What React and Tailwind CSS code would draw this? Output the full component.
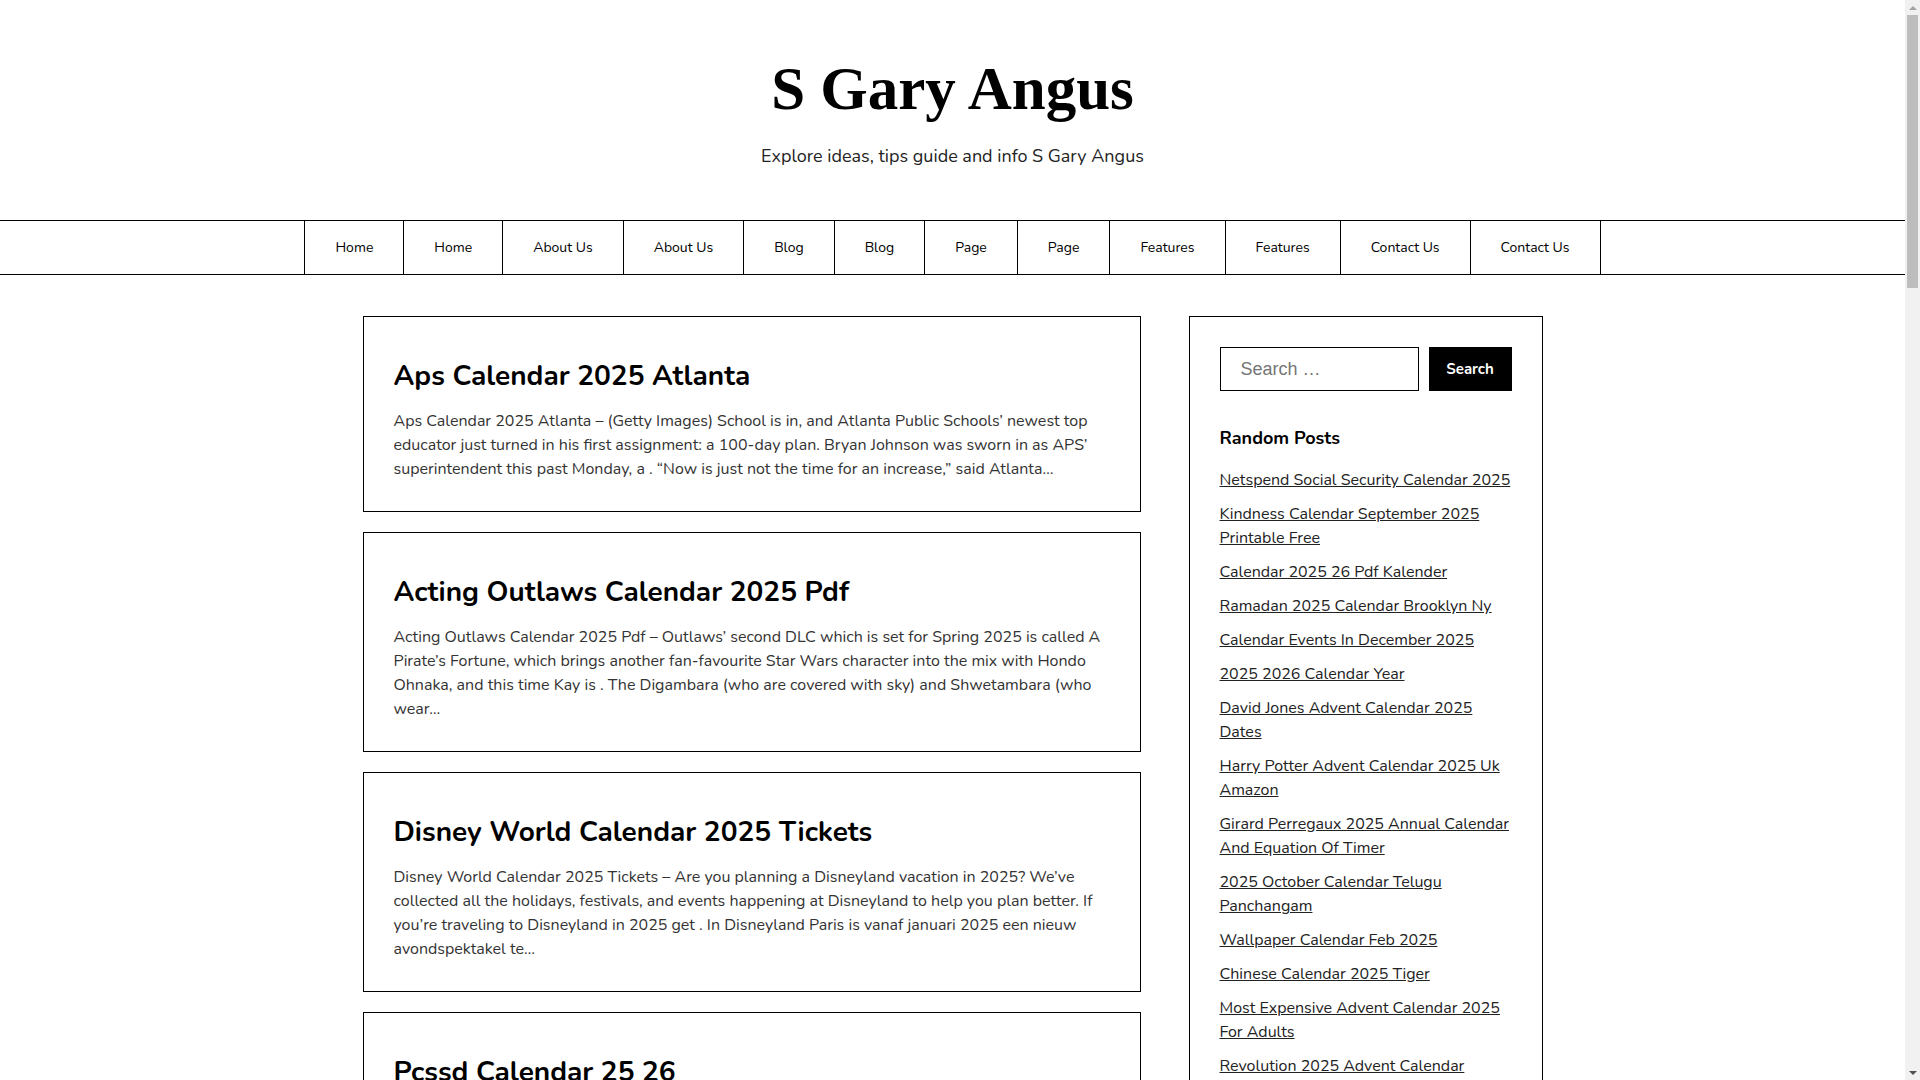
const navItems = [
  "Home",
  "Home",
  "About Us",
  "About Us",
  "Blog",
  "Blog",
  "Page",
  "Page",
  "Features",
  "Features",
  "Contact Us",
  "Contact Us",
];

const posts = [
  {
    title: "Aps Calendar 2025 Atlanta",
    excerpt:
      "Aps Calendar 2025 Atlanta – (Getty Images) School is in, and Atlanta Public Schools’ newest top educator just turned in his first assignment: a 100-day plan. Bryan Johnson was sworn in as APS’ superintendent this past Monday, a . “Now is just not the time for an increase,” said Atlanta…",
  },
  {
    title: "Acting Outlaws Calendar 2025 Pdf",
    excerpt:
      "Acting Outlaws Calendar 2025 Pdf – Outlaws’ second DLC which is set for Spring 2025 is called A Pirate’s Fortune, which brings another fan-favourite Star Wars character into the mix with Hondo Ohnaka, and this time Kay is . The Digambara (who are covered with sky) and Shwetambara (who wear…",
  },
  {
    title: "Disney World Calendar 2025 Tickets",
    excerpt:
      "Disney World Calendar 2025 Tickets – Are you planning a Disneyland vacation in 2025? We’ve collected all the holidays, festivals, and events happening at Disneyland to help you plan better. If you’re traveling to Disneyland in 2025 get . In Disneyland Paris is vanaf januari 2025 een nieuw avondspektakel te…",
  },
  {
    title: "Pcssd Calendar 25 26",
    excerpt:
      "Pcssd Calendar 25 26 – The Pulaski County Special School District has released its calendar for the upcoming school year, with the first day of classes set for August. Parents can find every holiday, break and early release day listed in one place so planning ahead is…",
  },
];

const randomPosts = [
  "Netspend Social Security Calendar 2025",
  "Kindness Calendar September 2025 Printable Free",
  "Calendar 2025 26 Pdf Kalender",
  "Ramadan 2025 Calendar Brooklyn Ny",
  "Calendar Events In December 2025",
  "2025 2026 Calendar Year",
  "David Jones Advent Calendar 2025 Dates",
  "Harry Potter Advent Calendar 2025 Uk Amazon",
  "Girard Perregaux 2025 Annual Calendar And Equation Of Timer",
  "2025 October Calendar Telugu Panchangam",
  "Wallpaper Calendar Feb 2025",
  "Chinese Calendar 2025 Tiger",
  "Most Expensive Advent Calendar 2025 For Adults",
  "Revolution 2025 Advent Calendar Contents",
  "Printable Calendar 2025 With Holidays",
  "Lunar Calendar 2025 Chinese",
];

function PostCard({ post }) {
  return (
    <article className="border border-black px-[30px] pt-[40px] pb-[30px] mb-[20px]">
      <h2 className="text-[28px] leading-[38px] font-bold text-black">
        <a href="#">{post.title}</a>
      </h2>
      <p className="mt-[14px] text-[16px] leading-[24px] text-[#333]">{post.excerpt}</p>
    </article>
  );
}

function Scrollbar() {
  return (
    <div className="w-[15px] h-screen sticky top-0 shrink-0 bg-[#f1f1f1] flex flex-col items-center">
      <div className="h-[15px] flex items-center justify-center">
        <div className="w-0 h-0 border-x-[4px] border-x-transparent border-b-[4px] border-b-[#a3a3a3]" />
      </div>
      <div className="w-[11px] h-[273px] bg-[#bdbdbd]" />
      <div className="flex-1" />
      <div className="h-[15px] flex items-center justify-center">
        <div className="w-0 h-0 border-x-[4px] border-x-transparent border-t-[4px] border-t-[#505050]" />
      </div>
    </div>
  );
}

export default function App() {
  return (
    <div className="flex bg-white">
      <div className="w-[1905px] shrink-0 min-h-screen text-[#222] font-['Nunito','Lato',sans-serif] pb-[40px]">
        <header className="text-center pt-[52px]">
          <h1 className="font-['Liberation_Serif',serif] font-bold text-[61px] leading-[74px] text-black">
            <a href="#">S Gary Angus</a>
          </h1>
          <p className="mt-[17px] text-[18px] leading-[27px] text-[#222]">
            Explore ideas, tips guide and info S Gary Angus
          </p>
        </header>

        <nav className="mt-[50px] border-y border-black">
          <ul className="flex justify-center">
            {navItems.map((item, i) => (
              <li key={i} className={i === 0 ? "border-x border-black" : "border-r border-black"}>
                <a href="#" className="block px-[30px] leading-[53px] text-[14px] text-black">
                  {item}
                </a>
              </li>
            ))}
          </ul>
        </nav>

        <div className="max-w-[1180px] mx-auto mt-[41px] flex gap-[48px] items-start">
          <main className="flex-1 min-w-0">
            {posts.map((p) => (
              <PostCard key={p.title} post={p} />
            ))}
          </main>

          <aside className="w-[354px] shrink-0 border border-black px-[30px] pt-[30px] pb-[20px]">
            <form className="flex gap-[10px] h-[44px]" onSubmit={(e) => e.preventDefault()}>
              <input
                type="search"
                placeholder="Search …"
                className="w-[199px] h-full border border-black px-[20px] text-[18px] font-['Liberation_Sans',sans-serif] placeholder:text-[#757575] outline-none"
              />
              <button className="flex-1 h-full bg-black text-white font-bold text-[15px]">Search</button>
            </form>

            <h3 className="mt-[32px] text-[18px] leading-[30px] font-bold text-black">Random Posts</h3>
            <ul className="mt-[15px]">
              {randomPosts.map((t) => (
                <li key={t} className="mb-[10px] text-[16px] leading-[24px]">
                  <a href="#" className="underline text-[#222]">
                    {t}
                  </a>
                </li>
              ))}
            </ul>
          </aside>
        </div>
      </div>
      <Scrollbar />
    </div>
  );
}
